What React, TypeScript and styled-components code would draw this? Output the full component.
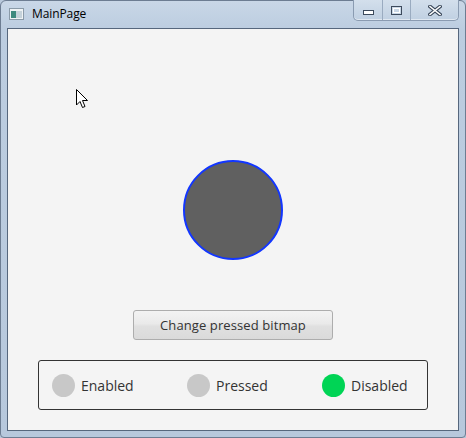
import React from "react";
import styled, { createGlobalStyle } from "styled-components";

const Global = createGlobalStyle`
  html, body { margin: 0; padding: 0; background: #b9c9dc; }
  body { width: 466px; height: 438px; overflow: hidden; }
`;

const Window = styled.div`
  position: relative;
  box-sizing: border-box;
  width: 466px;
  height: 438px;
  border: 1px solid #6d7d92;
  border-radius: 6px 6px 4px 4px;
  background: linear-gradient(180deg, #c9d7e7 0px, #bccde0 28px, #b7c8dc 100%);
  padding: 0 6px 6px 6px;
  display: flex;
  flex-direction: column;
  font-family: "Open Sans", "Noto Sans", sans-serif;
`;

const TitleBar = styled.div`
  position: relative;
  height: 27px;
  display: flex;
  align-items: center;
  gap: 8px;
  padding-left: 2px;
  padding-bottom: 2px;
  box-sizing: border-box;
`;

const AppIcon = styled.svg`
  width: 15px;
  height: 12px;
  flex: none;
`;

const Title = styled.span`
  font-family: "Open Sans", "Noto Sans", sans-serif;
  font-size: 12px;
  color: #000;
  letter-spacing: -0.1px;
`;

const Controls = styled.div`
  position: absolute;
  right: 0px;
  top: -1px;
  display: flex;
  height: 20px;
  border: 1px solid #8a9bb1;
  border-top: none;
  border-radius: 0 0 5px 5px;
  background: linear-gradient(180deg, #d3dfec, #c0d0e2);
  overflow: hidden;
  box-shadow: inset 0 -1px 0 rgba(255,255,255,0.5);
`;

const CtrlBtn = styled.div<{ $w: number; $sep?: boolean }>`
  width: ${(p) => p.$w}px;
  height: 100%;
  display: flex;
  align-items: center;
  justify-content: center;
  border-left: ${(p) => (p.$sep ? "1px solid #9aabc0" : "none")};
`;

const Client = styled.div`
  flex: 1;
  background: #f4f4f4;
  border: 1px solid #56677d;
  display: flex;
  flex-direction: column;
  align-items: center;
  position: relative;
`;

const Ball = styled.div`
  margin-top: 131px;
  width: 100px;
  height: 100px;
  box-sizing: border-box;
  border-radius: 50%;
  background: #606060;
  border: 2px solid #1236ff;
`;

const Button = styled.button`
  margin-top: 50px;
  width: 200px;
  height: 30px;
  border: 1px solid #adadad;
  border-radius: 3px;
  background: linear-gradient(180deg, #f3f3f3 0%, #eaeaea 45%, #e0e0e0 55%, #dadada 100%);
  font-family: "Open Sans", "Noto Sans", sans-serif;
  font-size: 13px;
  letter-spacing: 0.1px;
  color: #333;
  padding: 0 0 1px 0;
  cursor: default;
`;

const Panel = styled.div`
  margin-top: 20px;
  width: 390px;
  height: 50px;
  box-sizing: border-box;
  border: 1px solid #333;
  border-radius: 3px;
  display: grid;
  grid-template-columns: 135px 135px 1fr;
  align-items: center;
  padding-left: 13px;
`;

const Indicator = styled.div`
  display: flex;
  align-items: center;
  gap: 6px;
`;

const Dot = styled.span<{ $on?: boolean }>`
  width: 23px;
  height: 23px;
  border-radius: 50%;
  background: ${(p) => (p.$on ? "#00d455" : "#c8c8c8")};
  flex: none;
`;

const Label = styled.span`
  font-family: "Open Sans", "Noto Sans", sans-serif;
  font-size: 14px;
  color: #333;
`;

const Cursor = styled.svg`
  position: absolute;
  left: 68px;
  top: 60px;
  width: 13px;
  height: 20px;
`;

export default function App() {
  return (
    <>
      <Global />
      <Window>
        <TitleBar>
          <AppIcon viewBox="0 0 15 12">
            <rect x="0.5" y="0.5" width="14" height="11" fill="#eef2f4" stroke="#8a9aa8" />
            <rect x="2" y="3" width="5" height="7" fill="#3e8a7e" />
            <rect x="7" y="3" width="6" height="7" fill="#c5d2da" />
          </AppIcon>
          <Title>MainPage</Title>
          <Controls>
            <CtrlBtn $w={28}>
              <svg width="11" height="9" viewBox="0 0 11 9">
                <rect x="0.5" y="4.5" width="10" height="4" fill="#fff" stroke="#3c4a5c" />
              </svg>
            </CtrlBtn>
            <CtrlBtn $w={27} $sep>
              <svg width="11" height="9" viewBox="0 0 11 9">
                <rect x="0.5" y="0.5" width="10" height="8" fill="none" stroke="#3c4a5c" />
                <rect x="2.5" y="2.5" width="6" height="4" fill="none" stroke="#fff" />
              </svg>
            </CtrlBtn>
            <CtrlBtn $w={47} $sep>
              <svg width="14" height="11" viewBox="0 0 14 11">
                <path d="M2 1.5 L12 9.5 M12 1.5 L2 9.5" stroke="#3c4a5c" strokeWidth="3.6" strokeLinecap="square" />
                <path d="M2 1.5 L12 9.5 M12 1.5 L2 9.5" stroke="#fff" strokeWidth="1.6" strokeLinecap="square" />
              </svg>
            </CtrlBtn>
          </Controls>
        </TitleBar>
        <Client>
          <Cursor viewBox="0 0 13 20">
            <path d="M0.5 0.5 L0.5 16 L4 12.5 L6.5 18.5 L9 17.5 L6.5 11.5 L11.5 11.5 Z" fill="#fff" stroke="#000" strokeWidth="1" strokeLinejoin="miter" />
          </Cursor>
          <Ball />
          <Button>Change pressed bitmap</Button>
          <Panel>
            <Indicator>
              <Dot />
              <Label>Enabled</Label>
            </Indicator>
            <Indicator>
              <Dot />
              <Label>Pressed</Label>
            </Indicator>
            <Indicator>
              <Dot $on />
              <Label>Disabled</Label>
            </Indicator>
          </Panel>
        </Client>
      </Window>
    </>
  );
}
